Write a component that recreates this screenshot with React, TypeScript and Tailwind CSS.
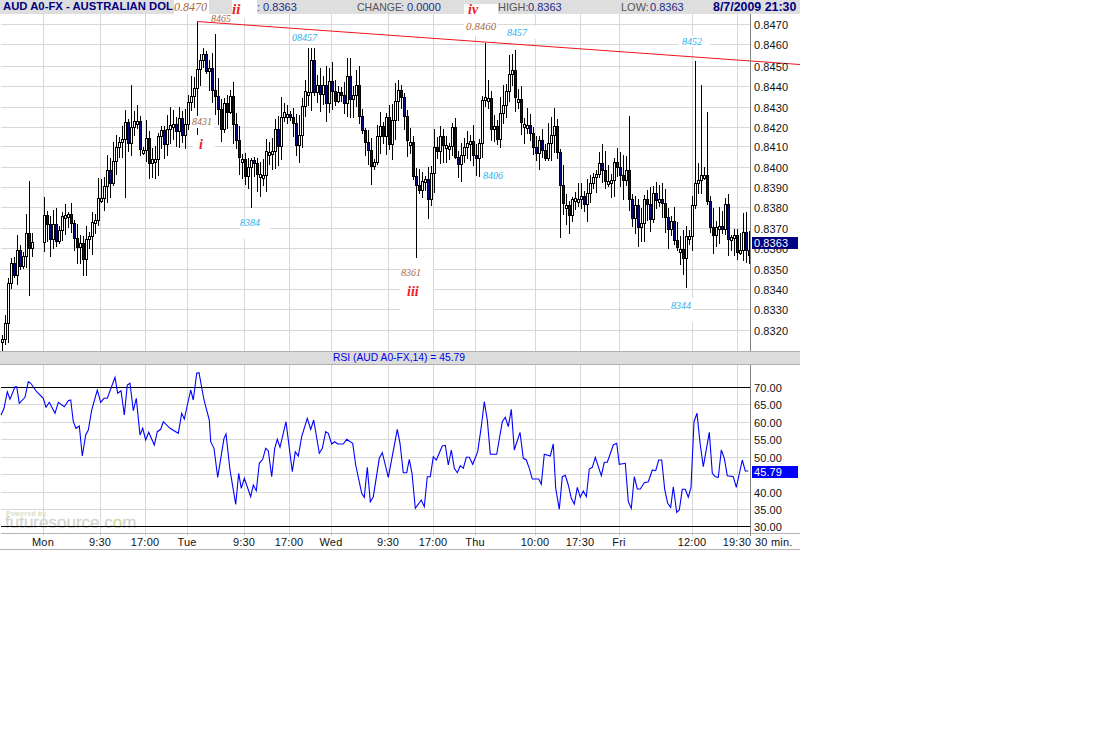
const SANS = '"Liberation Sans", Arial, sans-serif'
const SERIF = '"Liberation Serif", "Times New Roman", serif'

// rough close path of the price panel, page coordinates
const PRICE_PATH: [number, number][] = [
  [1, 340], [5, 323], [7, 287], [10, 275], [15, 257], [20, 257], [24, 240], [29, 233], [32, 228],
  [43, 225], [50, 237], [58, 233], [67, 223], [75, 230], [82, 252], [88, 240], [93, 213], [98, 190],
  [107, 180], [113, 150], [117, 130], [133, 130], [147, 150], [157, 147], [167, 130], [183, 123],
  [192, 93], [197, 57], [202, 57], [208, 73], [213, 100], [220, 123], [230, 100], [233, 150],
  [247, 167], [257, 180], [267, 143], [277, 133], [287, 97], [293, 143], [303, 100], [310, 73],
  [320, 100], [330, 87], [340, 90], [353, 87], [360, 117], [370, 157], [383, 127], [390, 133],
  [397, 97], [400, 100], [407, 133], [415, 197], [428, 190], [430, 170], [437, 143], [450, 130],
  [457, 160], [467, 150], [475, 155], [483, 90], [490, 120], [497, 130], [503, 90], [513, 80],
  [520, 110], [527, 120], [533, 145], [543, 150], [553, 120], [557, 170], [563, 200], [580, 205],
  [597, 175], [603, 175], [617, 160], [627, 180], [630, 215], [637, 215], [647, 210], [663, 200],
  [667, 230], [677, 245], [687, 245], [693, 170], [700, 165], [707, 210], [713, 240], [723, 210],
  [730, 240], [737, 255], [743, 235], [749, 243],
]

// wicks that stand out from the rest
const WICKS: Record<number, { high?: number; low?: number }> = {
  4: { low: 345 }, 28: { high: 181, low: 296 }, 43: { high: 197 }, 85: { low: 276 }, 124: { low: 198 },
  130: { high: 85 }, 197: { high: 22, low: 135 }, 214: { high: 34 }, 250: { low: 208 }, 307: { high: 48 },
  313: { high: 48 }, 415: { low: 258 }, 484: { high: 43 }, 511: { high: 54 }, 559: { low: 238 },
  628: { high: 116 }, 685: { low: 288 }, 694: { high: 61 }, 700: { high: 85 }, 706: { high: 112 },
}

const RSI_3X: [number, number][] = [
  [3, 135], [12, 115], [22, 65], [30, 88], [45, 50], [50, 50], [58, 100], [75, 82], [85, 35], [92, 40],
  [110, 65], [130, 85], [138, 112], [148, 97], [165, 130], [175, 97], [193, 110], [205, 92], [212, 90],
  [220, 155], [228, 175], [238, 168], [247, 258], [257, 195], [265, 180], [275, 120], [292, 60], [302, 97],
  [312, 85], [322, 85], [345, 22], [353, 70], [363, 62], [373, 135], [382, 45], [390, 40], [400, 122],
  [409, 85], [420, 195], [428, 175], [437, 210], [446, 187], [463, 225], [472, 185], [482, 178], [490, 155],
  [510, 175], [535, 190], [545, 130], [553, 147], [572, 60], [580, 90], [590, 10], [597, 8], [612, 90],
  [628, 150], [632, 215], [642, 235], [653, 322], [672, 205], [678, 192], [690, 300], [707, 403], [716, 310],
  [724, 355], [733, 325], [752, 380], [760, 345], [769, 362], [778, 280], [788, 268], [797, 235], [805, 242],
  [815, 320], [824, 235], [832, 208], [840, 232], [858, 155], [877, 305], [886, 245], [895, 258], [905, 200],
  [922, 145], [932, 178], [941, 150], [958, 250], [967, 235], [977, 185], [985, 190], [995, 222], [1004, 215],
  [1013, 222], [1030, 222], [1040, 208], [1058, 220], [1067, 285], [1085, 370], [1093, 382], [1102, 292],
  [1111, 395], [1120, 380], [1138, 265], [1147, 248], [1165, 322], [1192, 178], [1200, 220], [1210, 308],
  [1220, 308], [1228, 268], [1236, 310], [1246, 415], [1264, 390], [1273, 410], [1282, 320], [1291, 320],
  [1300, 260], [1309, 270], [1327, 228], [1336, 226], [1345, 285], [1354, 240], [1363, 295], [1372, 308],
  [1381, 287], [1390, 295], [1399, 262], [1408, 262], [1418, 283], [1433, 245], [1444, 170], [1453, 95],
  [1462, 150], [1471, 253], [1490, 253], [1507, 155], [1516, 142], [1525, 170], [1534, 118], [1543, 240],
  [1560, 187], [1570, 265], [1579, 270], [1588, 295], [1597, 327], [1616, 327], [1624, 343], [1633, 253],
  [1651, 258], [1660, 222], [1667, 355], [1678, 418], [1687, 320], [1696, 316], [1705, 345], [1714, 385],
  [1723, 402], [1732, 352], [1741, 382], [1750, 363], [1759, 380], [1768, 297], [1777, 292], [1786, 262],
  [1804, 317], [1813, 277], [1822, 277], [1840, 225], [1850, 220], [1858, 283], [1876, 280], [1885, 395],
  [1894, 415], [1903, 320], [1912, 357], [1921, 357], [1933, 338], [1945, 335], [1957, 300], [1967, 302],
  [1976, 270], [1985, 270], [1994, 358], [2003, 400], [2012, 412], [2020, 350], [2030, 427], [2038, 420],
  [2047, 358], [2056, 358], [2065, 382], [2073, 352], [2082, 155], [2091, 130], [2100, 218], [2110, 290],
  [2128, 187], [2137, 310], [2146, 320], [2155, 322], [2164, 240], [2173, 265], [2182, 317], [2200, 320],
  [2209, 352], [2227, 270], [2236, 303], [2245, 303],
]

const V_GRID = [43, 100, 145, 187, 244, 289, 331, 388, 433, 475, 535, 580, 619, 692, 737]
const PRICE_ROWS = [24, 44, 66, 86, 107, 127, 146, 167, 187, 207, 228, 248, 269, 289, 309, 330]
const PRICE_LABELS = ['0.8470', '0.8460', '0.8450', '0.8440', '0.8430', '0.8420', '0.8410', '0.8400', '0.8390', '0.8380', '0.8370', '0.8360', '0.8350', '0.8340', '0.8330', '0.8320']
const RSI_ROWS = [387, 404, 422, 439, 457, 474, 492, 509, 526]
const RSI_LABELS = ['70.00', '65.00', '60.00', '55.00', '50.00', '45.00', '40.00', '35.00', '30.00']
const TIME_LABELS: [number, string][] = [
  [43, 'Mon'], [100, '9:30'], [145, '17:00'], [187, 'Tue'], [244, '9:30'], [289, '17:00'], [331, 'Wed'],
  [388, '9:30'], [433, '17:00'], [475, 'Thu'], [535, '10:00'], [580, '17:30'], [619, 'Fri'], [692, '12:00'], [737, '19:30'],
]

// white boxes pasted over the chart behind the hand-written counts
const PATCHES = [
  [210, 14, 24, 10], [290, 30, 31, 12], [190, 116, 24, 12], [193, 135, 22, 18], [240, 218, 30, 21],
  [400, 264, 33, 47], [464, 14, 34, 22], [505, 26, 31, 13], [482, 169, 28, 13], [670, 298, 23, 24], [678, 36, 32, 11],
]
const COUNTS: [number, number, string][] = [
  [211, 22, '8465'], [292, 41, '08457'], [192, 125, '8431'], [240, 226, '8384'], [401, 276, '8361'],
  [507, 36, '8457'], [483, 179, '8406'], [671, 309, '8344'], [682, 45, '8452'],
]
const BROWN = new Set(['8465', '8431', '8361'])

function lerp(path: [number, number][], x: number) {
  for (let i = 1; i < path.length; i++) {
    if (x <= path[i][0]) {
      const [x0, y0] = path[i - 1]
      const [x1, y1] = path[i]
      return y0 + ((y1 - y0) * (x - x0)) / (x1 - x0 || 1)
    }
  }
  return path[path.length - 1][1]
}

function buildCandles() {
  let seed = 20090807
  const rand = () => {
    seed = (seed * 1664525 + 1013904223) % 4294967296
    return seed / 4294967296
  }
  const bars = []
  let prev = 340
  for (let x = 1; x <= 748; x += 3) {
    if (x > 32 && x < 41) continue
    const close = Math.round(lerp(PRICE_PATH, x) + (rand() - 0.5) * 28)
    const open = Math.abs(close - prev) < 3 ? close + 3 : prev
    const top = Math.min(open, close)
    const bottom = Math.max(open, close)
    const forced = Object.entries(WICKS).find(([k]) => Math.abs(Number(k) - x) <= 1)?.[1]
    const high = forced?.high ?? Math.max(top - Math.round(2 + rand() * 18), 48)
    const low = forced?.low ?? bottom + Math.round(2 + rand() * 18)
    bars.push({ x, top: Math.max(top, 48), bottom, high, low, up: close < open })
    prev = close
  }
  return bars
}

const CANDLES = buildCandles()
const RSI_POINTS = RSI_3X.map(([x, y]) => `${(x / 3).toFixed(1)},${(370 + y / 3).toFixed(1)}`).join(' ')

function GridLines({ rows, top, bottom }: { rows: number[]; top: number; bottom: number }) {
  return (
    <g stroke="#d8d8d8" shapeRendering="crispEdges">
      {rows.map((y) => (
        <line key={y} x1={1} x2={750} y1={y + 0.5} y2={y + 0.5} />
      ))}
      {V_GRID.map((x) => (
        <line key={x} x1={x + 0.5} x2={x + 0.5} y1={top} y2={bottom} />
      ))}
    </g>
  )
}

function PricePanel() {
  return (
    <svg width={800} height={337} viewBox="0 14 800 337" className="block">
      <GridLines rows={PRICE_ROWS} top={14} bottom={351} />
      <g shapeRendering="crispEdges">
        {CANDLES.map((c) => (
          <g key={c.x}>
            <line x1={c.x + 1.5} x2={c.x + 1.5} y1={c.high} y2={c.low} stroke="#000" />
            <rect
              x={c.x + 0.5}
              y={c.top + 0.5}
              width={2}
              height={c.bottom - c.top}
              fill={c.up ? '#fff' : '#0a0a80'}
              stroke="#000"
            />
          </g>
        ))}
      </g>
      {PATCHES.map(([x, y, w, h]) => (
        <rect key={`${x}-${y}`} x={x} y={y} width={w} height={h} fill="#fff" />
      ))}
      <line x1={197} y1={21.5} x2={800} y2={64.5} stroke="#f0141e" />
      <line x1={750.5} x2={750.5} y1={14} y2={351} stroke="#808080" shapeRendering="crispEdges" />
      <g fontFamily={SERIF} fontStyle="italic" fontSize={10}>
        {COUNTS.map(([x, y, label]) => (
          <text key={label + x} x={x} y={y} fill={BROWN.has(label) ? '#a5693f' : '#1fb0f0'}>
            {label}
          </text>
        ))}
        <text x={466} y={30} fill="#a5693f" fontSize={11}>0.8460</text>
      </g>
      <g fontFamily={SERIF} fontStyle="italic" fontWeight="bold" fill="#ee1c25" fontSize={14}>
        <text x={199} y={149}>i</text>
        <text x={407} y={296}>iii</text>
      </g>
      <g fontFamily={SANS} fontSize={11} fill="#111">
        {PRICE_LABELS.map((label, i) => (
          <text key={label} x={754} y={PRICE_ROWS[i] + 5} letterSpacing={0.1}>
            {label}
          </text>
        ))}
      </g>
      <rect x={752} y={237} width={46} height={12} fill="#000080" />
      <text x={754} y={247} fontFamily={SANS} fontSize={11} fill="#fff" letterSpacing={0.1}>0.8363</text>
    </svg>
  )
}

function RsiPanel() {
  return (
    <svg width={800} height={169} viewBox="0 365 800 169" className="block">
      <GridLines rows={RSI_ROWS} top={365} bottom={533} />
      <g fontFamily={SANS}>
        <text x={6} y={516} fontSize={6.5} fontWeight="bold" fill="#d9dcc0" letterSpacing={0.4}>Powered by</text>
        <text x={5} y={528} fontSize={17} fill="#d4d4d0" stroke="#d4d4d0" strokeWidth={0.3}>
          futuresource.c<tspan fill="#cfdc9c" stroke="#cfdc9c">o</tspan>m
        </text>
      </g>
      <g stroke="#000" shapeRendering="crispEdges">
        <line x1={1} x2={750} y1={387.5} y2={387.5} />
        <line x1={1} x2={750} y1={526.5} y2={526.5} />
      </g>
      <polyline points={RSI_POINTS} fill="none" stroke="#0000ff" strokeWidth={1.1} />
      <line x1={750.5} x2={750.5} y1={365} y2={534} stroke="#808080" shapeRendering="crispEdges" />
      <line x1={1} x2={800} y1={533.5} y2={533.5} stroke="#b4b4b4" shapeRendering="crispEdges" />
      <g fontFamily={SANS} fontSize={11} fill="#111">
        {RSI_LABELS.filter((label) => label !== '45.00').map((label) => (
          <text key={label} x={754} y={RSI_ROWS[RSI_LABELS.indexOf(label)] + 5} letterSpacing={0.1}>
            {label}
          </text>
        ))}
      </g>
      <rect x={752} y={466} width={46} height={12} fill="#0000ff" />
      <text x={754} y={476} fontFamily={SANS} fontSize={11} fill="#fff" letterSpacing={0.1}>45.79</text>
    </svg>
  )
}

function TimeAxis() {
  return (
    <svg width={800} height={16} viewBox="0 534 800 16" className="block">
      <g stroke="#d8d8d8" shapeRendering="crispEdges">
        {V_GRID.map((x) => (
          <line key={x} x1={x + 0.5} x2={x + 0.5} y1={534} y2={536} />
        ))}
      </g>
      <line x1={750.5} x2={750.5} y1={534} y2={536} stroke="#808080" shapeRendering="crispEdges" />
      <g fontFamily={SANS} fontSize={11} fill="#111" letterSpacing={0.2}>
        {TIME_LABELS.map(([x, label]) => (
          <text key={x} x={x} y={546} textAnchor="middle">
            {label}
          </text>
        ))}
        <text x={755} y={546}>30 min.</text>
      </g>
      <line x1={0} x2={800} y1={549.5} y2={549.5} stroke="#b4b4b4" shapeRendering="crispEdges" />
    </svg>
  )
}

function Header() {
  return (
    <div className="relative flex h-[14px] w-[800px] items-center bg-[#dedede] text-[11px] leading-none text-[#1c2a86]">
      <span className="w-[174px] whitespace-nowrap pl-[3px] text-[11.3px] font-bold text-[#000080]">
        AUD A0-FX - AUSTRALIAN DOL
      </span>
      <span
        className="flex h-full w-[35px] items-center bg-white text-[12px] italic text-[#a5693f]"
        style={{ fontFamily: SERIF }}
      >
        0.8470
      </span>
      <span className="w-[23px]" />
      <span
        className="h-[18px] w-[25px] self-start bg-white text-[15px] font-bold italic leading-[18px] text-[#ee1c25]"
        style={{ fontFamily: SERIF }}
      >
        ii
      </span>
      <span className="w-[100px] whitespace-nowrap">: 0.8363</span>
      <span className="w-[44px] whitespace-nowrap text-[10.5px] text-[#555]">CHANGE</span>
      <span className="w-[97px] whitespace-nowrap">: 0.0000</span>
      <span className="w-[30px] text-[#555]">HIGH:</span>
      <span className="w-[93px]">0.8363</span>
      <span className="w-[29px] text-[#555]">LOW:</span>
      <span className="w-[63px]">0.8363</span>
      <span className="whitespace-nowrap text-[12.4px] font-bold text-[#000080]">8/7/2009 21:30</span>
      <span
        className="absolute left-[464px] top-[4px] flex h-[12px] w-[34px] items-center bg-white pl-[4px] text-[14px] font-bold italic text-[#ee1c25]"
        style={{ fontFamily: SERIF }}
      >
        iv
      </span>
    </div>
  )
}

export default function App() {
  return (
    <div className="h-[736px] w-[1120px] overflow-hidden bg-white" style={{ fontFamily: SANS }}>
      <Header />
      <PricePanel />
      <div className="flex h-[14px] w-[800px] items-center justify-center border-y border-y-[#b0b0b0] bg-[#dcdcdc] pr-[2px] text-[10.3px] leading-none text-[#0000ee]">
        RSI (AUD A0-FX,14) = 45.79
      </div>
      <RsiPanel />
      <TimeAxis />
    </div>
  )
}
